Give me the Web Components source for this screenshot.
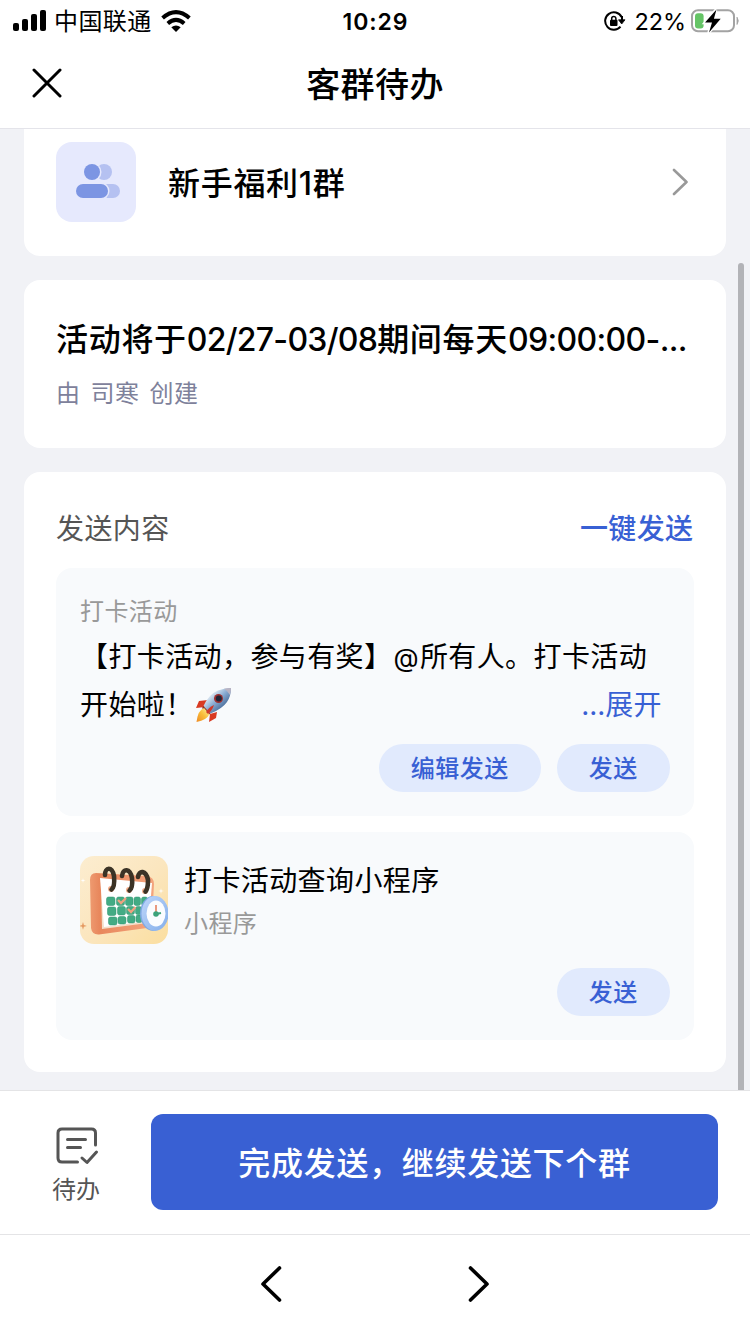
<!DOCTYPE html>
<html lang="zh-CN">
<head>
<meta charset="utf-8">
<title>客群待办</title>
<style>
html,body{margin:0;padding:0}
body{font-family:Inter,"Noto Sans CJK SC",sans-serif;color:#000;background:#fff;width:750px;height:1334px;overflow:hidden}
</style>
</head>
<body>
<todo-app></todo-app>
<script>
function define(name, html) {
  const t = document.createElement('template');
  t.innerHTML = html;
  customElements.define(name, class extends HTMLElement {
    constructor() {
      super();
      this.attachShadow({mode: 'open'}).appendChild(t.content.cloneNode(true));
    }
  });
}

define('status-bar', `<style>
:host{display:grid;grid-template-columns:1fr auto 1fr;align-items:center;height:39px;margin-bottom:1px;box-sizing:border-box;padding:0 10px 0 13px;font-size:24px;line-height:38px}
.l,.r{display:flex;align-items:center}.r{justify-content:flex-end}
svg{display:block;flex:none}
.c{letter-spacing:.4px;margin:0 9px 0 8px;padding-top:3px}
.t{font-weight:600;font-size:23px;letter-spacing:.9px;padding:2px 2px 0 0}
.p{font-size:23.5px;margin:0 5px 0 9px;padding-top:2px;letter-spacing:-.1px}
</style>
<div class="l">
<svg width="33" height="21" viewBox="0 0 33 21"><rect y="13" width="6" height="8" rx="2"/><rect x="9" y="9" width="6" height="12" rx="2"/><rect x="18" y="4" width="6" height="17" rx="2"/><rect x="27" width="6" height="21" rx="2"/></svg>
<span class="c">中国联通</span>
<svg width="30" height="22" viewBox="0 0 30 22" fill="none" stroke="#000" stroke-width="4"><path d="M1.6 8Q15-3.7 28.4 8"/><path d="M6.8 13.4Q15 6.3 23.2 13.4"/><path d="M10.3 17.3Q15 13.5 19.7 17.3L15 22Z" fill="#000" stroke="none"/></svg>
</div>
<span class="t">10:29</span>
<div class="r">
<svg width="22" height="20" viewBox="0 0 22 20" fill="none" stroke="#000" stroke-width="2" style="margin-top:1px"><path d="M17.600 6A8.700 8.700 0 1 0 16.500 15.600"/><path d="M14.500 8.800h6.500L17.700 13z" fill="#000"  stroke="#000" stroke-width=".8" stroke-linejoin="round"/><path d="M18 5v5"/><rect x="6" y="8.800" width="7.500" height="6.200" rx="1" fill="#000" stroke="none"/><path d="M7.700 9.400V7.500a2.100 2.100 0 0 1 4.200 0v2" stroke-width="1.500"/></svg>
<span class="p">22%</span>
<svg width="49" height="24" viewBox="0 0 49 24"><rect x="1" y="1.200" width="42" height="21" rx="6" fill="none" stroke="#a3a3a3" stroke-width="2"/><path d="M46 8.200q2.600 3.600 0 7.300z" fill="#a3a3a3" stroke="#a3a3a3" stroke-width=".8"/><rect x="4" y="4.200" width="8.600" height="15.200" rx="3" fill="#65c466"/><path d="M25 .500 13.500 14h6.800L17.500 24 30 9.600h-7z" stroke="#fff" stroke-width="2.600"/><path d="M25.500.400 14 13.500h7L18 23.600 29.700 9.800h-6.800z"/></svg>
</div>`);

define('nav-header', `<style>
:host{display:grid;grid-template-columns:62px 1fr 62px;align-items:center;height:89px;box-sizing:border-box;border-bottom:1px solid #e4e4ea}
svg{display:block;margin:-2px 0 0 31px}
h1{margin:0;text-align:center;font-size:34px;line-height:48px;font-weight:500;letter-spacing:.4px;padding-top:2px}
</style>
<svg width="31" height="30" viewBox="0 0 31 30" stroke="#000" stroke-width="3" stroke-linecap="round"><path d="M3 2 29 28M29 2 3 28"/></svg>
<h1><slot></slot></h1>`);

define('ui-card', `<style>
:host{display:block;background:#fff;border-radius:16px;box-sizing:border-box;padding:0 32px}
</style><slot></slot>`);

define('group-row', `<style>
:host{display:flex;align-items:center;padding:13px 6px 34px 0;height:80px}
.i{width:80px;height:80px;margin-right:32px;flex:none}
.n{flex:1;font-size:32px;font-weight:500;letter-spacing:.7px;line-height:48px;padding-top:4px}
</style>
<svg class="i" viewBox="0 0 80 80"><rect width="80" height="80" rx="16" fill="#e6e9fd"/><circle cx="48" cy="30" r="8" fill="#b5c1f1"/><rect x="38" y="42" width="26" height="14" rx="7" fill="#b5c1f1"/><circle cx="36" cy="30" r="9.500" fill="#e6e9fd"/><rect x="18" y="40" width="35.500" height="18" rx="9" fill="#e6e9fd"/><circle cx="36" cy="30" r="8" fill="#7c95e3"/><rect x="20" y="42" width="32" height="14" rx="7" fill="#7c95e3"/></svg>
<span class="n"><slot></slot></span>
<svg width="16" height="28" viewBox="0 0 16 28" fill="none" stroke="#999" stroke-width="2.600" stroke-linecap="round" stroke-linejoin="round"><path d="M2 2 14.500 14 2 26"/></svg>`);

define('activity-info', `<style>
:host{display:block;padding:36px 0 36px;white-space:nowrap}
.a{font-size:32px;font-weight:500;line-height:48px;letter-spacing:.7px}
.b{font-size:24px;line-height:36px;letter-spacing:.4px;word-spacing:3px;color:#7e819b;margin-top:12px}
</style>
<div class="a"><slot name="title"></slot></div><div class="b"><slot name="by"></slot></div>`);

define('section-head', `<style>
:host{display:flex;justify-content:space-between;align-items:center;height:96px;box-sizing:border-box;padding-top:14px;font-size:28px;letter-spacing:.4px;color:#555}
.a{color:#3860d4;font-weight:500;margin-right:.5px}
</style><span><slot></slot></span><span class="a"><slot name="action"></slot></span>`);

define('ui-pill', `<style>
:host{display:flex;align-items:center;justify-content:center;height:48px;box-sizing:border-box;padding:0 32.300px 3px 31.700px;border-radius:24px;background:#e1eafd;color:#3860d4;font-size:24px;font-weight:500;letter-spacing:.5px;white-space:nowrap}
</style><slot></slot>`);

define('content-box', `<style>
:host{display:flex;flex-direction:column;box-sizing:border-box;background:#f8fafc;border-radius:16px;padding:24px}
.f{display:flex;gap:16px;justify-content:flex-end;margin-top:auto}
</style><slot></slot><div class="f"><slot name="actions"></slot></div>`);

define('emoji-rocket', `<style>:host{display:inline-block;vertical-align:-8px;margin-left:1px}svg{display:block}</style>
<svg width="38" height="36" viewBox="0 0 38 36" role="img" aria-label="🚀">
<defs><linearGradient id="b" x1="0" y1="0" x2="1" y2="1"><stop offset=".25" stop-color="#e2ecf4"/><stop offset=".5" stop-color="#86a9d0"/><stop offset=".8" stop-color="#3d608f"/></linearGradient>
<linearGradient id="f" x1="1" y1="0" x2="0" y2="1"><stop stop-color="#fff3a0"/><stop offset=".5" stop-color="#f8bd38"/><stop offset="1" stop-color="#ef8a24"/></linearGradient></defs>
<path d="M13 13 4 14 1 21 10 20zM22 25 21 31 14 35 15 27z" fill="#d83a22"/>
<path d="M8.500 19Q14 7 23 3.500 29 1 36 1 36 9 32 15 27 22 15.500 26.500z" fill="url(#b)"/>
<path d="M29 1.700Q33 .8 36 1 36 4 35 8 33 4 29 1.700z" fill="#b9b4c3"/>
<path d="M8.500 19 15.500 26.500 13.500 28 7 21z" fill="#8b3025"/>
<path d="M9 21Q3 23 1.500 35 12 33 14.500 27z" fill="url(#f)"/>
<path d="M19 18Q14 20 11 25L13 27Q17 24 19 18z" fill="#cf3828"/>
<circle cx="23.500" cy="11.500" r="4.500" fill="#9f3031"/><circle cx="23.800" cy="11.600" r="3" fill="#232637"/></svg>`);

define('message-body', `<style>
:host{display:block;white-space:nowrap}
.k{font-size:24px;line-height:36px;letter-spacing:.4px;color:#999;padding-top:2px}
.m{font-size:28px;line-height:48px;letter-spacing:.4px;margin-top:3px}
.row{display:flex;justify-content:space-between;height:48px;padding-right:8px}
.e{color:#3860d4}
</style>
<div class="k"><slot name="kind"></slot></div>
<div class="m"><div><slot name="l1"></slot></div><div class="row"><span><slot name="l2"></slot></span><span class="e"><slot name="more"></slot></span></div></div>`);

define('calendar-art', `<style>:host{display:block;width:88px;height:88px;flex:none}svg{display:block}</style>
<svg width="88" height="88" viewBox="0 0 88 88">
<defs><clipPath id="c"><rect width="88" height="88" rx="14"/></clipPath>
<linearGradient id="g" x1="0" y1="0" x2="1" y2="1"><stop stop-color="#fcedd0"/><stop offset=".5" stop-color="#fbe6bf"/><stop offset="1" stop-color="#fbde9f"/></linearGradient>
<linearGradient id="o" x1="0" x2="1"><stop stop-color="#ee9a70"/><stop offset=".15" stop-color="#e8875c"/><stop offset="1" stop-color="#f4a57e"/></linearGradient>
<linearGradient id="w" x1="0" y1="0" x2="1" y2="1"><stop stop-color="#bed6fb"/><stop offset="1" stop-color="#83aeea"/></linearGradient></defs>
<g clip-path="url(#c)"><rect width="88" height="88" fill="url(#g)"/>
<path d="M16 17 67 20Q74 21 74 28L72 66Q72 71 67 72L19 78.500Q12 79 11 72L10 24Q10 17 16 17z" fill="url(#o)"/>
<path d="M21 24 70 28 68 67 22 73z" fill="#f4e0cb"/><path d="M20 22 72 27 69 65 24 71z" fill="#fff"/>
<g fill="#43ab84" stroke="#2f956f" stroke-width=".5"><rect x="26.500" y="41" width="8.500" height="8.500" rx="2"/><rect x="36.500" y="41" width="8" height="8.500" rx="2"/><rect x="45.500" y="41" width="7.500" height="8.500" rx="2"/><rect x="54" y="41" width="6.500" height="8.500" rx="2"/><rect x="61.500" y="41" width="6" height="8.500" rx="2"/>
<rect x="27.500" y="51" width="8.500" height="8.500" rx="2"/><rect x="37.500" y="50.500" width="8" height="8.500" rx="2"/><rect x="46.500" y="50.500" width="8" height="8" rx="2"/><rect x="55.500" y="50.500" width="6" height="8" rx="2"/>
<rect x="28.500" y="61" width="8.500" height="8" rx="2"/><rect x="38" y="60.500" width="8" height="7.500" rx="2"/><rect x="47.500" y="59.500" width="7.500" height="7.500" rx="2"/><rect x="56" y="59" width="6" height="7.500" rx="2"/></g>
<path d="m38 44 3 3 5-5M48 53l3 3 4.500-5" fill="none" stroke="#f0a17f" stroke-width="2.300"/>
<g fill="#f3ad8a"><circle cx="31" cy="33" r="3"/><circle cx="49" cy="34" r="3"/><circle cx="65" cy="35" r="3"/></g>
<g fill="none" stroke="#3b3326" stroke-width="4.600" stroke-linecap="round"><path d="M25 19C25 11 32 10 34 20Q35 31 31.500 33.500"/><path d="M42 20C43 12 50 12 52 22Q53 32 49.500 34.500"/><path d="M58 21C59 14 66 14 68 24Q68 33 65.500 35.500"/></g>
<ellipse cx="73" cy="57.500" rx="13" ry="17.500" fill="#7fa8e3"/><ellipse cx="75" cy="57.500" rx="13.500" ry="17.500" fill="url(#w)"/><ellipse cx="76" cy="57.500" rx="9.500" ry="13" fill="#fafcff"/>
<path d="M76 49v9" stroke="#e99a80" stroke-width="2"/><path d="M76 58l5-1" stroke="#43a37e" stroke-width="2"/><circle cx="76" cy="58" r="2.800" fill="#3ca27b"/>
<path d="m3 66 .9 3 3 .9-3 .9-.9 3-.9-3-3-.9 3-.9z" fill="#e59a62"/><path d="m3 22 .5 2 2 .5-2 .5-.5 2-.5-2-2-.5 2-.5zM81 32l.5 2.500 2.500.5-2.500.5-.5 2.500-.5-2.500-2.500-.5 2.500-.5z" fill="#fff"/></g></svg>`);

define('mini-program', `<style>
:host{display:flex;gap:16px}
.t{padding-top:3px;white-space:nowrap}
.a{font-size:28px;line-height:44px;letter-spacing:.4px}.b{font-size:24px;line-height:36px;color:#999;letter-spacing:.4px;margin-top:3px}
</style><calendar-art></calendar-art><div class="t"><div class="a"><slot></slot></div><div class="b"><slot name="kind"></slot></div></div>`);

define('action-bar', `<style>
:host{display:flex;box-sizing:border-box;height:144px;border-top:1px solid #e4e4e6;padding:23px 32px 24px 0;background:#fff}
.todo{width:151px;display:flex;flex-direction:column;align-items:center;color:#555;font-size:24px;line-height:34px}
.todo svg{margin:13px 0 8px 4px}
.todo span{padding-left:1px}
button{flex:1;border:0;margin:0;padding:4px 0 0;border-radius:12px;background:#3960d3;color:#fff;font:500 32px/48px Inter,"Noto Sans CJK SC",sans-serif;letter-spacing:.7px}
</style>
<div class="todo"><svg width="43" height="38" viewBox="0 0 43 38" fill="none" stroke="#555" stroke-width="3" stroke-linecap="round" stroke-linejoin="round"><path d="M39.500 18V6q0-4-4-4H6Q2 2 2 6V31q0 4 4 4H21.500M11.500 12.500h18M11.500 20.500h13M26 31l5 4.500L40.500 25"/></svg><span><slot name="todo"></slot></span></div>
<button><slot></slot></button>`);

define('browser-nav', `<style>
:host{display:flex;justify-content:center;gap:184px;box-sizing:border-box;height:100px;border-top:1px solid #e4e4e6;padding:30px 0 0 0;background:#fff}
svg{display:block}
</style>
<svg width="24" height="38" viewBox="0 0 24 38" fill="none" stroke="#000" stroke-width="3.600" stroke-linecap="round" stroke-linejoin="round"><path d="M20.500 3 4 19 20.500 35"/></svg>
<svg width="24" height="38" viewBox="0 0 24 38" fill="none" stroke="#000" stroke-width="3.600" stroke-linecap="round" stroke-linejoin="round"><path d="M3.500 3 20 19 3.500 35"/></svg>`);

define('todo-app', `<style>
:host{display:flex;flex-direction:column;width:750px;height:1334px;background:#fff}
main{position:relative;height:961px;background:#f1f2f6;padding:0 24px;box-sizing:border-box;display:flex;flex-direction:column;gap:24px}
.first{height:127px;border-radius:0 0 16px 16px}
.info{height:168px}.send{height:600px}
.bar{position:absolute;right:6px;top:134px;bottom:0;width:6px;border-radius:3px 3px 0 0;background:#b2b3b7}
.num{letter-spacing:-.73px}.num.t{letter-spacing:-.65px}
.dots{letter-spacing:-.1px}
.at{display:inline-block;width:27.500px;font-size:26px;line-height:30px;text-align:center;letter-spacing:0}
</style>
<status-bar></status-bar>
<nav-header>客群待办</nav-header>
<main>
<ui-card class="first"><group-row>新手福利1群</group-row></ui-card>
<ui-card class="info"><activity-info><span slot="title">活动将于<span class="num">02/27-03/08</span>期间每天<span class="num t">09:00:00-...</span></span><span slot="by">由 司寒 创建</span></activity-info></ui-card>
<ui-card class="send">
<section-head>发送内容<span slot="action">一键发送</span></section-head>
<content-box style="height:248px"><message-body><span slot="kind">打卡活动</span><span slot="l1">【打卡活动，参与有奖】<span class="at">@</span>所有人。打卡活动</span><span slot="l2">开始啦！<emoji-rocket></emoji-rocket></span><span slot="more"><span class="dots">...</span>展开</span></message-body><ui-pill slot="actions">编辑发送</ui-pill><ui-pill slot="actions">发送</ui-pill></content-box>
<content-box style="height:208px;margin-top:16px"><mini-program>打卡活动查询小程序<span slot="kind">小程序</span></mini-program><ui-pill slot="actions">发送</ui-pill></content-box>
</ui-card>
<div class="bar"></div>
</main>
<action-bar><span slot="todo">待办</span>完成发送，继续发送下个群</action-bar>
<browser-nav></browser-nav>`);
</script>
</body>
</html>
